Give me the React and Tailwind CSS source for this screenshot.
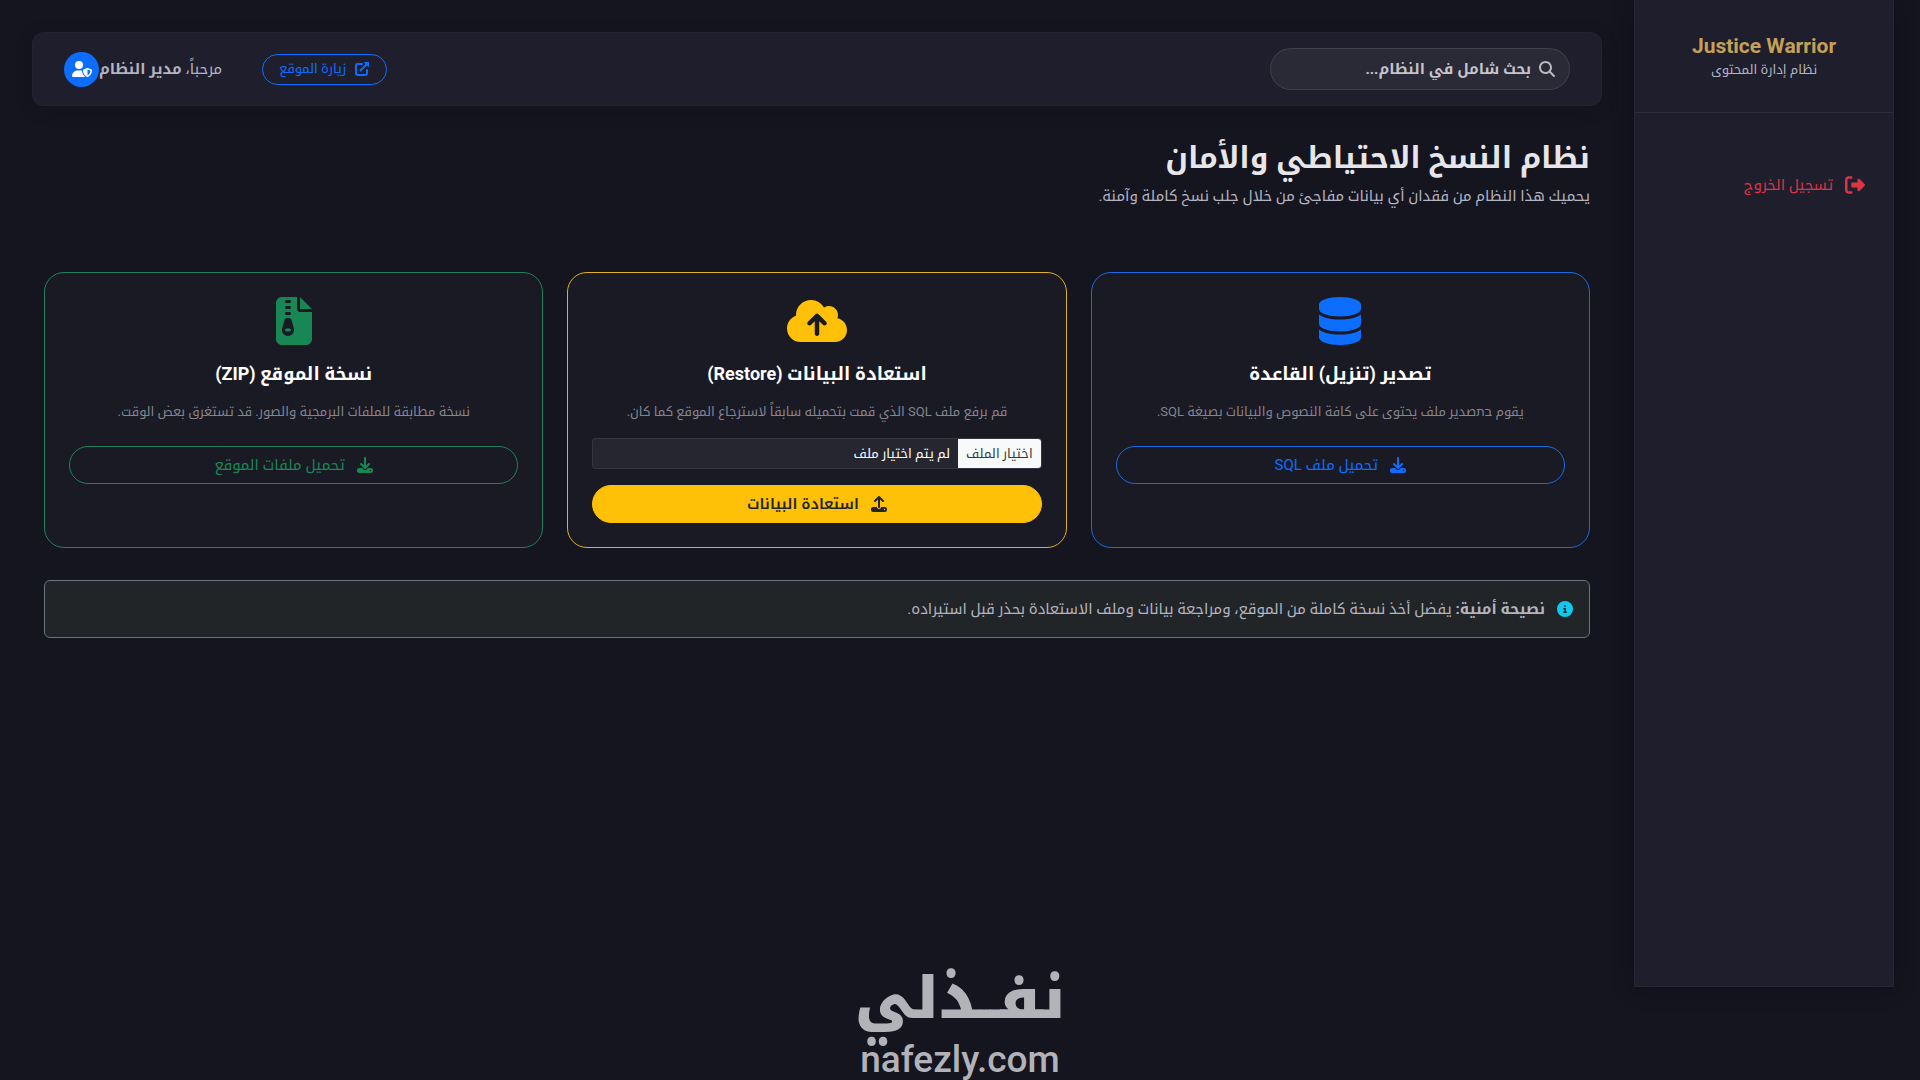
import {
  FaCircleInfo,
  FaCloudArrowUp,
  FaDatabase,
  FaDownload,
  FaFileZipper,
  FaMagnifyingGlass,
  FaRightFromBracket,
  FaUpload,
  FaUserShield,
} from "react-icons/fa6";

function VisitIcon() {
  return (
    <svg viewBox="0 0 16 16" className="size-4" fill="none" stroke="currentColor" strokeWidth="2" aria-hidden="true">
      <path d="M8 3H3.5A1.5 1.5 0 0 0 2 4.500V12.500A1.500 1.500 0 0 0 3.500 14H11.500A1.500 1.500 0 0 0 13 12.500V9" strokeLinecap="round" />
      <path d="M6.500 9.500L13 3" strokeLinecap="round" />
      <path d="M9.500 1H15V6.500Z" fill="currentColor" stroke="none" />
    </svg>
  );
}

function Sidebar() {
  return (
    <aside className="min-h-[calc(100vh-93px)] w-[260px] shrink-0 self-start border border-t-0 border-white/3 bg-[#1f1e2d] shadow-[0_0_20px_rgba(10,10,30,0.4)]">
      <div className="flex h-[113px] flex-col items-center border-b border-white/6 pt-8">
        <a href="#home" className="text-[21px] leading-7 font-bold text-[#c5a059]">
          Justice Warrior
        </a>
        <p className="text-[13px] leading-5 text-[#b4b4c0]">نظام إدارة المحتوى</p>
      </div>
      <nav className="px-7 pt-14">
        <a href="#logout" className="flex items-center gap-3 text-[15px] leading-8 text-[#dc3545]">
          <FaRightFromBracket className="size-5" />
          تسجيل الخروج
        </a>
      </nav>
    </aside>
  );
}

function TopBar() {
  return (
    <header className="flex h-[74px] items-center justify-between rounded-xl border border-white/2 bg-[#1f1e2d] px-[31px] shadow-[0_4px_16px_rgba(16,16,36,0.3)]">
      <label className="flex h-[42px] w-[300px] items-center gap-2 rounded-full border border-white/10 bg-[#2a2936] px-[14px]">
        <FaMagnifyingGlass className="size-4 shrink-0 text-[#b9b9c2]" />
        <input
          type="search"
          aria-label="بحث"
          placeholder="بحث شامل في النظام..."
          className="w-full min-w-0 bg-transparent text-[15px] font-bold outline-none placeholder:text-[#c4c4cc]"
        />
      </label>
      <div className="flex items-center gap-10">
        <a
          href="#site"
          className="flex h-[31px] items-center gap-2 rounded-full border border-[#0d6efd] px-4 text-[13px] text-[#0d6efd]"
        >
          <VisitIcon />
          زيارة الموقع
        </a>
        <div className="flex items-center text-[15px] text-[#b4b4c0]">
          <span>
            مرحباً، <b>مدير النظام</b>
          </span>
          <span className="flex size-[35px] items-center justify-center rounded-full bg-[#0d6efd] text-white">
            <FaUserShield className="size-5" />
          </span>
        </div>
      </div>
    </header>
  );
}

function Card({ border, icon, title, text, children }) {
  return (
    <section className={`flex min-h-[276px] flex-col rounded-[20px] border bg-[#1a1a25] p-6 text-center ${border}`}>
      <div className="flex h-12 items-center justify-center">{icon}</div>
      <h2 className="mt-4 text-lg leading-[25px] font-bold text-white">{title}</h2>
      <p className="mt-4 text-[13px] leading-5 text-[#85858f]">{text}</p>
      {children}
    </section>
  );
}

const pill = "flex h-[38px] w-full items-center justify-center gap-3 rounded-full border text-[15px]";

export default function App() {
  return (
    <div
      dir="rtl"
      lang="ar"
      className="relative flex min-h-screen bg-[#15151f] pr-[26px] font-['Roboto','Noto_Kufi_Arabic','DejaVu_Sans',sans-serif]"
    >
      <Sidebar />
      <main className="min-w-0 flex-1 p-8">
        <TopBar />
        <div className="px-3">
          <div className="pt-8">
            <h1 className="text-[30px] leading-10 font-bold text-[#e6e6ea]">نظام النسخ الاحتياطي والأمان</h1>
            <p className="text-[15px] leading-9 text-[#b4b4c0]">
              يحميك هذا النظام من فقدان أي بيانات مفاجئ من خلال جلب نسخ كاملة وآمنة.
            </p>
          </div>

          <div className="mt-[58px] grid grid-cols-3 gap-6">
            <Card
              border="border-[#1a6be0]"
              icon={<FaDatabase className="size-12 text-[#0d6efd]" />}
              title="تصدير (تنزيل) القاعدة"
              text="يقوم בתصدير ملف يحتوى على كافة النصوص والبيانات بصيغة SQL."
            >
              <button type="button" className={`${pill} mt-6 border-[#1a6be0] text-[#0d6efd]`}>
                <FaDownload className="size-4" />
                تحميل ملف SQL
              </button>
            </Card>

            <Card
              border="border-[#e0b020]"
              icon={<FaCloudArrowUp className="size-[60px] text-[#ffc107]" />}
              title="استعادة البيانات (Restore)"
              text="قم برفع ملف SQL الذي قمت بتحميله سابقاً لاسترجاع الموقع كما كان."
            >
              <label className="mt-4 flex h-[31px] shrink-0 cursor-pointer items-stretch overflow-hidden rounded border border-white/7 bg-[#262631] text-[13px] text-white">
                <input type="file" className="sr-only" />
                <span className="flex items-center bg-[#f8f9fa] px-2 text-[#343a40]">اختيار الملف</span>
                <span className="flex items-center px-2">لم يتم اختيار ملف</span>
              </label>
              <button
                type="button"
                className={`${pill} mt-4 border-[#ffc107] bg-[#ffc107] font-semibold text-[#212529]`}
              >
                <FaUpload className="size-4" />
                استعادة البيانات
              </button>
            </Card>

            <Card
              border="border-[#22805f]"
              icon={<FaFileZipper className="size-12 text-[#198754]" />}
              title="نسخة الموقع (ZIP)"
              text="نسخة مطابقة للملفات البرمجية والصور. قد تستغرق بعض الوقت."
            >
              <button type="button" className={`${pill} mt-6 border-[#22805f] text-[#198754]`}>
                <FaDownload className="size-4" />
                تحميل ملفات الموقع
              </button>
            </Card>
          </div>

          <div
            role="note"
            className="mt-8 flex min-h-[58px] items-center gap-3 rounded-md border border-[#6c757d] bg-[#212527] px-4 text-[15px] text-[#b4b4c0]"
          >
            <FaCircleInfo className="size-4 text-[#0dcaf0]" />
            <p>
              <b>نصيحة أمنية:</b> يفضل أخذ نسخة كاملة من الموقع، ومراجعة بيانات وملف الاستعادة بحذر قبل استيراده.
            </p>
          </div>
        </div>
      </main>

      <div className="pointer-events-none absolute inset-x-0 bottom-0 flex flex-col items-center text-[#b2b2b9]">
        <p className="text-[58px] leading-[84px] font-black">نفــذلي</p>
        <p dir="ltr" className="text-[37px] leading-10 font-medium">
          nafezly.com
        </p>
      </div>
    </div>
  );
}
